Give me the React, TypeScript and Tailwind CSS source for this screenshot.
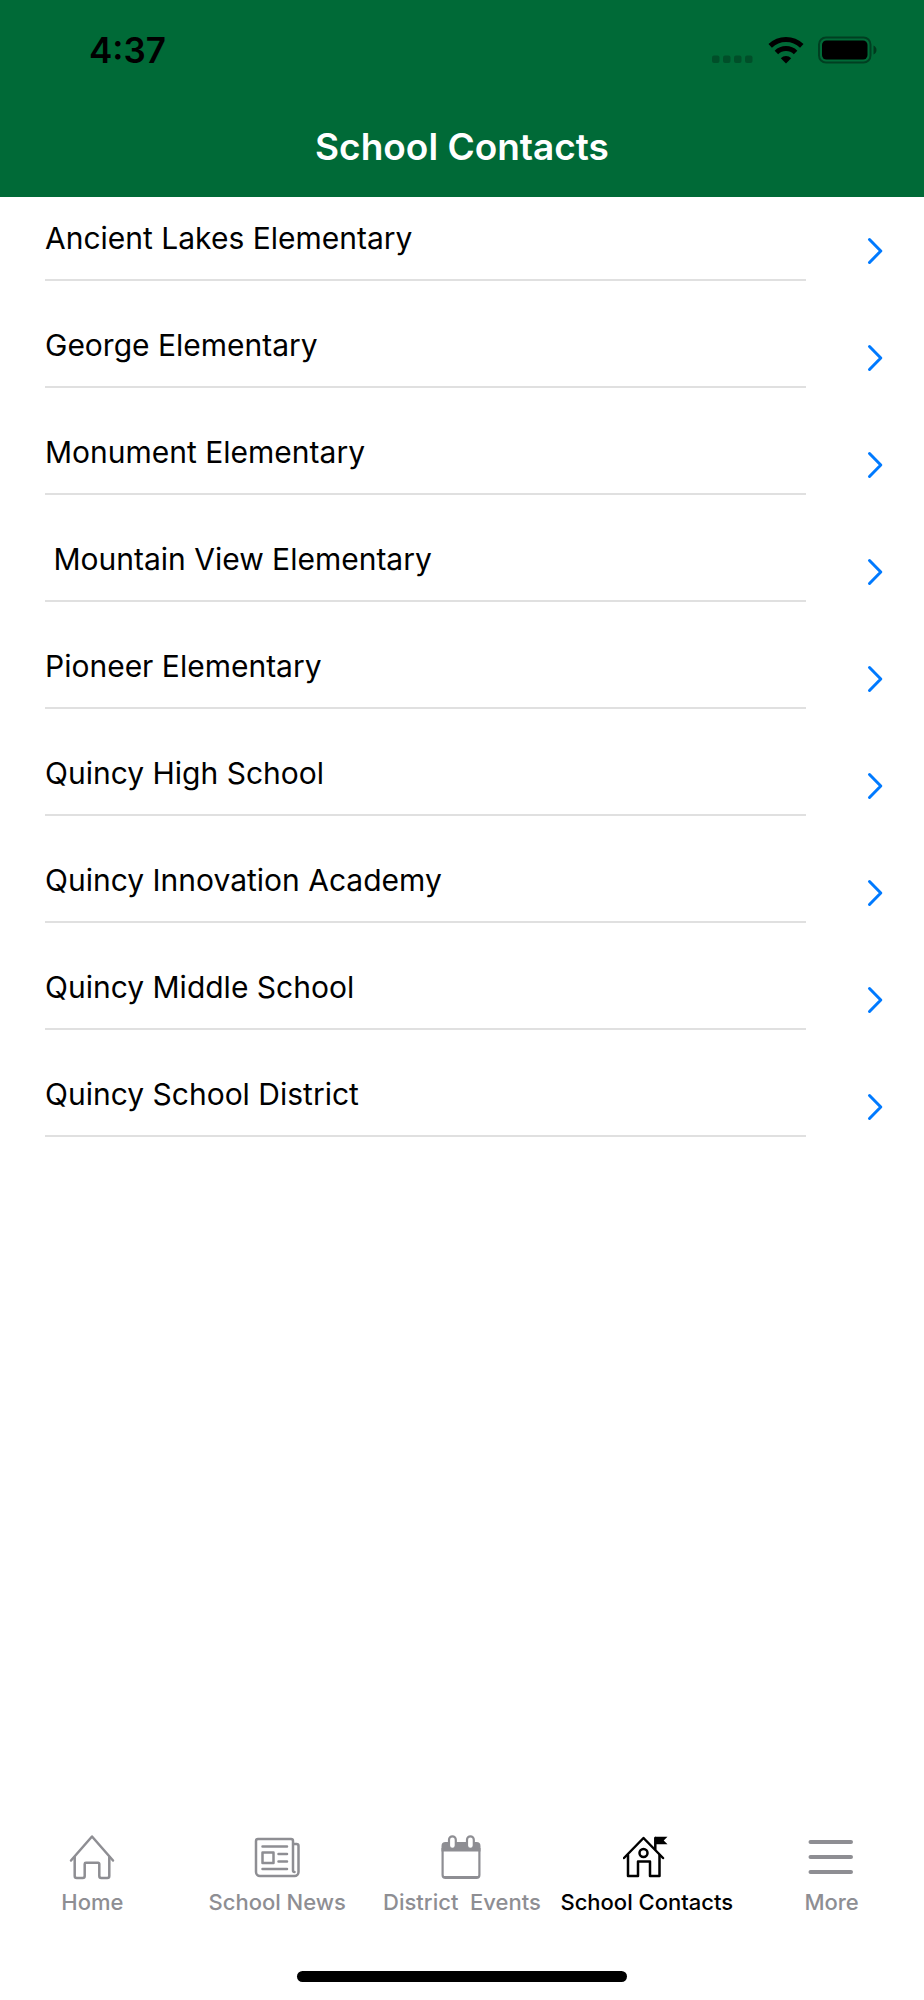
import { useState } from "react";

interface IconProps {
  className?: string;
}

type TabType = {
  label: string;
  icon: React.FC<IconProps>;
};

const schools = [
  "Ancient Lakes Elementary",
  "George Elementary",
  "Monument Elementary",
  "\u00a0Mountain View Elementary",
  "Pioneer Elementary",
  "Quincy High School",
  "Quincy Innovation Academy",
  "Quincy Middle School",
  "Quincy School District",
];

const HomeIcon: React.FC<IconProps> = ({ className }) => (
  <svg className={className} viewBox="0 0 48 48" fill="none" stroke="currentColor" strokeWidth="2.500" strokeLinecap="round" strokeLinejoin="round" aria-hidden="true">
    <path d="M3 28.500 24 4.500 45 28.500" />
    <path d="M6.700 25v19a2 2 0 0 0 2 2h6a2 2 0 0 0 2-2V32a1.200 1.200 0 0 1 1.200-1.200h12.200a1.200 1.200 0 0 1 1.200 1.200v12a2 2 0 0 0 2 2h6a2 2 0 0 0 2-2V25" />
  </svg>
);

const NewsIcon: React.FC<IconProps> = ({ className }) => (
  <svg className={className} viewBox="0 0 48 48" fill="none" stroke="currentColor" strokeWidth="2.500" strokeLinecap="round" strokeLinejoin="round" aria-hidden="true">
    <path d="M40 12V9a2 2 0 0 0-2-2H5a2 2 0 0 0-2 2v31a4 4 0 0 0 4 4h34.500a4 4 0 0 0 4-4V14a2 2 0 0 0-2-2H40v26.500q0 1.500 1.500 1.500" />
    <path d="M9.500 14.500H34M25.500 22H34M25.500 29.500H34M9.500 37H34" />
    <rect x="9.500" y="20.500" width="11" height="10.500" />
  </svg>
);

const CalendarIcon: React.FC<IconProps> = ({ className }) => (
  <svg className={className} viewBox="0 0 48 48" fill="none" stroke="currentColor" strokeWidth="2.200" aria-hidden="true">
    <path fill="currentColor" stroke="none" d="M3.500 14a4 4 0 0 1 4-4h31a4 4 0 0 1 4 4v5.500h-39z" />
    <path d="M4.600 16v27a3 3 0 0 0 3 3h30.800a3 3 0 0 0 3-3V16" />
    <path d="M5.500 45h35" />
    <rect x="11" y="4.300" width="6.800" height="12.500" rx="3.400" fill="white" />
    <rect x="29" y="4.300" width="6.800" height="12.500" rx="3.400" fill="white" />
  </svg>
);

const SchoolIcon: React.FC<IconProps> = ({ className }) => (
  <svg className={className} viewBox="2 0 48 48" fill="none" stroke="currentColor" strokeWidth="2.500" strokeLinecap="round" strokeLinejoin="round" aria-hidden="true">
    <path d="M3 26 22.500 6 42 26" />
    <path d="M7 23V44h10V29.500h12V44h9.500V23" />
    <circle cx="22.500" cy="21" r="4" />
    <path d="M34.300 17V6" />
    <path fill="currentColor" stroke="none" d="M34 4.800h12.500l-3.800 3.700 3.800 3.700H34z" />
  </svg>
);

const MoreIcon: React.FC<IconProps> = ({ className }) => (
  <svg className={className} viewBox="0 0 48 48" fill="none" stroke="currentColor" strokeWidth="4" strokeLinecap="round" aria-hidden="true">
    <path d="M2.500 10H43M2.500 25H43M2.500 40H43" />
  </svg>
);

const tabs: TabType[] = [
  { label: "Home", icon: HomeIcon },
  { label: "School News", icon: NewsIcon },
  { label: "District\u00a0 Events", icon: CalendarIcon },
  { label: "School Contacts", icon: SchoolIcon },
  { label: "More", icon: MoreIcon },
];

const StatusBar = () => (
  <div className="flex h-[100px] items-center justify-between pl-[89px] pr-[46px] text-black">
    <span className="text-[35px] font-semibold leading-10">4:37</span>
    <div className="flex items-center">
      {/* no signal */}
      <svg className="mr-[14px] h-7 w-[42px]" viewBox="0 0 42 28" fill="currentColor" fillOpacity="0.250" aria-hidden="true">
        <rect x="0" y="19.500" width="7.500" height="7.500" rx="2" />
        <rect x="11" y="19.500" width="7.500" height="7.500" rx="2" />
        <rect x="22" y="19.500" width="7.500" height="7.500" rx="2" />
        <rect x="33" y="19.500" width="7.500" height="7.500" rx="2" />
      </svg>
      <svg className="mr-[14px] h-7 w-9" viewBox="0 0 36 28" fill="none" stroke="currentColor" aria-hidden="true">
        <path strokeWidth="5" d="M2.200 9.900a22.700 22.700 0 0 1 31.600 0" />
        <path strokeWidth="5" d="M8.400 16.500a13.700 13.700 0 0 1 19.200 0" />
        <path fill="currentColor" stroke="none" d="M18 27.500 12.800 22.200a7.400 7.400 0 0 1 10.400 0z" />
      </svg>
      <svg className="h-7 w-[60px]" viewBox="0 0 60 28" aria-hidden="true">
        <rect x="1" y="1.500" width="51.500" height="25" rx="7" fill="none" stroke="black" strokeOpacity="0.400" strokeWidth="2" />
        <rect x="4" y="4.500" width="45.500" height="19" rx="4.500" fill="black" />
        <path d="M55.500 9.500q3 1.500 3 4.500t-3 4.500z" fill="black" fillOpacity="0.450" />
      </svg>
    </div>
  </div>
);

const SchoolList = () => (
  <ul className="flex flex-col gap-[46px] pt-[23px]">
    {schools.map((school) => (
      <li key={school}>
        <a href="#" className="flex items-center pl-[45px] pr-10">
          <span className="flex-1 border-b-2 border-[#e0e0e0] pb-[23px] text-[30px] leading-9">
            {school}
          </span>
          <svg className="ml-[60px] h-7 w-[18px] text-[#007aff]" viewBox="0 0 18 28" fill="none" stroke="currentColor" strokeWidth="3" strokeLinecap="round" strokeLinejoin="round" aria-hidden="true">
            <path d="M3.500 2.500 14.800 14 3.500 25.500" />
          </svg>
        </a>
      </li>
    ))}
  </ul>
);

const App = () => {
  const [activeTab, setActiveTab] = useState("School Contacts");

  return (
    <div className="flex min-h-screen flex-col bg-white font-['Inter',sans-serif] text-black">
      <header className="bg-[#006a37] pb-[26px]">
        <StatusBar />
        <h1 className="pt-[23px] text-center text-[37px] font-semibold leading-[48px] text-white">
          School Contacts
        </h1>
      </header>
      <main className="flex-1">
        <SchoolList />
      </main>
      <nav className="grid grid-cols-5">
        {tabs.map(({ label, icon: Icon }) => (
          <button
            key={label}
            type="button"
            onClick={() => setActiveTab(label)}
            className={`flex flex-col items-center gap-2 whitespace-nowrap text-[22px] font-medium leading-7 ${
              activeTab === label ? "text-black" : "text-[#8e8e93]"
            }`}
          >
            <Icon className="size-12" />
            {label}
          </button>
        ))}
      </nav>
      <div className="flex justify-center pb-[18px] pt-[55px]">
        <div className="h-[11px] w-[330px] rounded-full bg-black" />
      </div>
    </div>
  );
};

export default App;
